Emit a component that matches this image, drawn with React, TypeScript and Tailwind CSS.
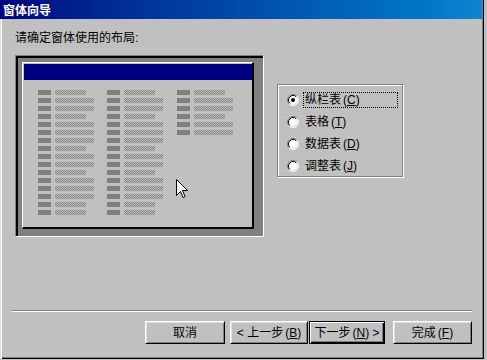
import React, { ReactNode } from "react";

// field pattern in the layout preview (S = short bar, L = long bar)
const COL_LONG = [0, 1, 1, 0, 1, 1, 1, 0, 1, 1, 0, 1, 1, 1, 0, 0];
const COL3_LONG = [0, 1, 1, 0, 1, 1];

const FieldRow = ({ long }: { long: boolean }) => (
    <div className="flex h-[8px] items-center gap-[4px]">
        <div className="h-[5px] w-[13px] bg-[#808080]" />
        <div
            className={
                (long ? "w-[39px] " : "w-[31px] ") +
                "h-[5px] bg-[repeating-conic-gradient(#808080_0%_25%,#c0c0c0_0%_50%)] bg-[length:2px_2px]"
            }
        />
    </div>
);

const FieldColumn = ({ rows, width }: { rows: number[]; width: string }) => (
    <div className={"flex flex-col " + width}>
        {rows.map((r, i) => (
            <FieldRow key={i} long={r === 1} />
        ))}
    </div>
);

const Radio = ({ checked }: { checked?: boolean }) => (
    <svg width="12" height="12" viewBox="0 0 12 12" className="shrink-0">
        <circle cx="6" cy="6" r="5" fill="#fff" />
        <path d="M2.11 9.89 A5.5 5.5 0 0 1 9.89 2.11" fill="none" stroke="#808080" strokeWidth="1" />
        <path d="M9.89 2.11 A5.5 5.5 0 0 1 2.11 9.89" fill="none" stroke="#fff" strokeWidth="1" />
        <path d="M2.82 9.18 A4.5 4.5 0 0 1 9.18 2.82" fill="none" stroke="#000" strokeWidth="1" />
        <path d="M9.18 2.82 A4.5 4.5 0 0 1 2.82 9.18" fill="none" stroke="#dfdfdf" strokeWidth="1" />
        {checked ? <circle cx="6" cy="6" r="2" fill="#000" /> : null}
    </svg>
);

const RadioItem = ({ children, checked, focused }: { children: ReactNode; checked?: boolean; focused?: boolean }) => (
    <div className="flex h-[22px] items-center pl-[9px]">
        <Radio checked={checked} />
        <span
            className={
                (focused ? "w-[95px] border-black " : "border-transparent ") +
                "ml-[4px] flex h-[16px] items-center border border-dotted px-[1px] text-[12px] leading-[14px] text-black"
            }
        >
            <span>{children}</span>
        </span>
    </div>
);

const Key = ({ k }: { k: string }) => (
    <span className="ml-[2px]">
        (<u className="underline-offset-[1px]">{k}</u>)
    </span>
);

const WinButton = ({ children, width, isDefault }: { children: ReactNode; width: string; isDefault?: boolean }) => (
    <button
        type="button"
        className={
            width +
            " flex h-[23px] items-center justify-center bg-[#c0c0c0] text-[12px] leading-[14px] text-black " +
            (isDefault
                ? "border border-black shadow-[inset_1px_1px_0_#fff,inset_-1px_-1px_0_#000,inset_-2px_-2px_0_#808080]"
                : "border border-t-white border-l-white border-r-black border-b-black shadow-[inset_1px_1px_0_#dfdfdf,inset_-1px_-1px_0_#808080]")
        }
    >
        <span className="whitespace-pre">{children}</span>
    </button>
);

const App = () => {
    return (
        <div className="h-[360px] w-[487px] overflow-hidden bg-[#c0c0c0] font-['Liberation_Sans','Noto_Sans_CJK_SC',sans-serif]">
            <div className="flex h-[359px] w-[484px] flex-col bg-[#c0c0c0] shadow-[inset_1px_0_0_#dfdfdf,inset_2px_0_0_#fff,inset_-1px_-1px_0_#000,inset_-2px_-2px_0_#808080]">
                {/* title bar */}
                <div className="h-[19px] w-[482px] bg-gradient-to-r from-[#000080] to-[#1084d0] pl-[3px] pt-[4px] text-[12px] font-bold leading-[14px] text-white">
                    窗体向导
                </div>

                <div className="pl-[15px] pt-[12px] text-[12px] leading-[14px] text-black">请确定窗体使用的布局:</div>

                <div className="mt-[10px] flex items-start pl-[15px]">
                    {/* layout preview */}
                    <div className="h-[182px] w-[249px] border border-t-[#808080] border-l-[#808080] border-b-white border-r-white">
                        <div className="h-full w-full border-t-2 border-l-2 border-black bg-[#808080] pb-[7px] pl-[4px] pr-[9px] pt-[4px]">
                            <div className="relative h-full w-full border-t border-l border-t-white border-l-white border-b-2 border-r-2 border-black bg-[#c0c0c0] pl-[1px] pt-[1px]">
                                <div className="h-[16px] w-[228px] bg-[#000080]" />
                                <div className="mt-[8px] flex pl-[14px]">
                                    <FieldColumn rows={COL_LONG} width="w-[69px]" />
                                    <FieldColumn rows={COL_LONG} width="w-[70px]" />
                                    <FieldColumn rows={COL3_LONG} width="w-[60px]" />
                                </div>
                                {/* mouse pointer */}
                                <svg width="12" height="19" viewBox="0 0 12 19" className="absolute left-[153px] top-[116px]">
                                    <path
                                        d="M0.5 0.5 L0.5 16.5 L4.5 12.5 L7 18.5 L9 17.5 L6.5 11.5 L11.5 11.5 Z"
                                        fill="#fff"
                                        stroke="#000"
                                        strokeWidth="1"
                                        strokeLinejoin="miter"
                                    />
                                </svg>
                            </div>
                        </div>
                    </div>

                    {/* layout options */}
                    <div className="ml-[13px] mt-[29px] h-[93px] w-[126px] border border-[#808080] pt-[4px] shadow-[inset_1px_1px_0_#fff,1px_1px_0_#fff]">
                        <RadioItem checked focused>
                            纵栏表<Key k="C" />
                        </RadioItem>
                        <RadioItem>
                            表格<Key k="T" />
                        </RadioItem>
                        <RadioItem>
                            数据表<Key k="D" />
                        </RadioItem>
                        <RadioItem>
                            调整表<Key k="J" />
                        </RadioItem>
                    </div>
                </div>

                {/* separator */}
                <div className="ml-[12px] mt-[73px] h-[2px] w-[460px] border-t border-t-[#808080] border-b border-b-white" />

                <div className="mt-[9px] flex pl-[145px]">
                    <WinButton width="w-[80px]">取消</WinButton>
                    <WinButton width="ml-[5px] w-[78px]">
                        {"< 上一步"}
                        <Key k="B" />
                    </WinButton>
                    <WinButton width="ml-[1px] w-[76px]" isDefault>
                        下一步
                        <Key k="N" />
                        {" >"}
                    </WinButton>
                    <WinButton width="ml-[8px] w-[79px]">
                        完成<Key k="F" />
                    </WinButton>
                </div>
            </div>
        </div>
    );
};

export default App;
